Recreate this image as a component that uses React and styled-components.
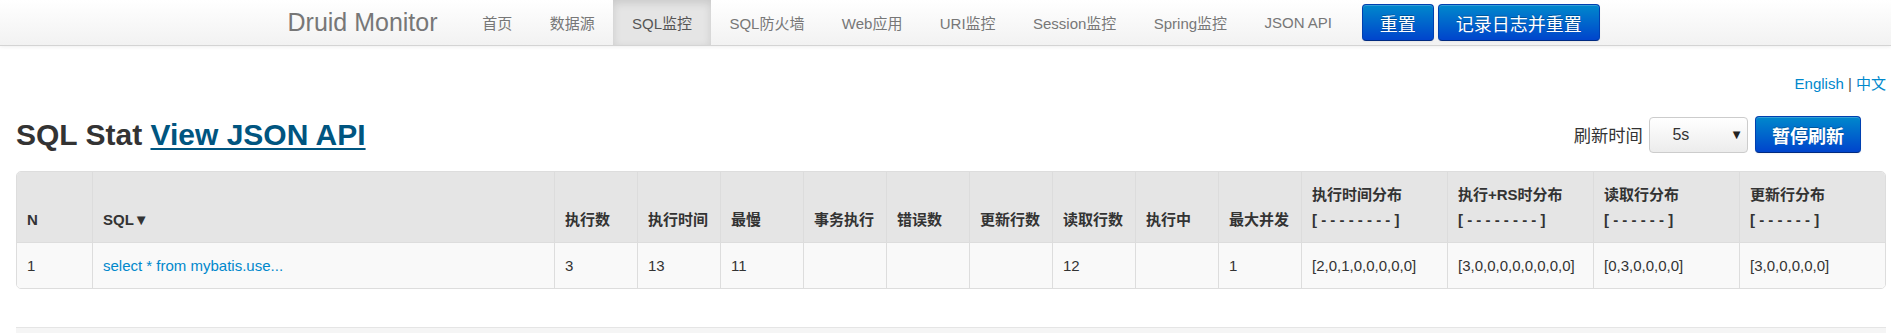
import React from "react";
import styled, { createGlobalStyle } from "styled-components";

const FONT = `"Liberation Sans", Arial, "Noto Sans CJK SC", sans-serif`;

const Global = createGlobalStyle`
  html, body { margin: 0; padding: 0; overflow: hidden; background: #fff; }
  body { font-family: ${FONT}; font-size: 15px; color: #333; }
  * { box-sizing: border-box; }
`;

const NavBar = styled.div`
  height: 46px;
  background: linear-gradient(to bottom, #ffffff, #f2f2f2);
  border-bottom: 1px solid #d4d4d4;
  box-shadow: 0 1px 4px rgba(0, 0, 0, 0.065);
`;

const NavInner = styled.div`
  width: 1316px;
  margin: 0 auto;
  height: 45px;
  display: flex;
  align-items: center;
`;

const Brand = styled.a`
  font-size: 25px;
  color: #777;
  text-decoration: none;
  margin-right: 26px;
  line-height: 45px;
`;

const NavList = styled.ul`
  list-style: none;
  margin: 0;
  padding: 0;
  display: flex;
  height: 45px;
`;

const NavItem = styled.li`
  height: 45px;
  padding: 0 18.7px;
  display: flex;
  align-items: center;
  font-size: 15px;
  color: ${(p) => (p.$active ? "#555" : "#777")};
  background: ${(p) => (p.$active ? "#e5e5e5" : "transparent")};
  box-shadow: ${(p) => (p.$active ? "inset 0 3px 8px rgba(0,0,0,0.125)" : "none")};
  white-space: nowrap;
`;

const NavButtons = styled.div`
  display: flex;
  gap: 4px;
  margin-left: 11px;
`;

const PrimaryButton = styled.button`
  font-family: ${FONT};
  height: 37px;
  padding: 0 ${(p) => p.$pad || 17}px;
  font-size: 18px;
  font-weight: ${(p) => (p.$bold ? "bold" : "normal")};
  color: #fff;
  text-shadow: 0 -1px 0 rgba(0, 0, 0, 0.25);
  background: linear-gradient(to bottom, #0088cc, #0044cc);
  border: 1px solid #0040b0;
  border-bottom-color: #002a80;
  border-radius: 4px;
  box-shadow: inset 0 1px 0 rgba(255, 255, 255, 0.2), 0 1px 2px rgba(0, 0, 0, 0.05);
  white-space: nowrap;
  cursor: pointer;
`;

const Page = styled.div`
  padding: 0 5px 0 16px;
`;

const LangBar = styled.div`
  margin-top: 28px;
  text-align: right;
  font-size: 15px;
  line-height: 20px;
  color: #555;
`;

const Link = styled.a`
  color: #0088cc;
  text-decoration: none;
`;

const HeaderRow = styled.div`
  margin-top: 22px;
  height: 37px;
  display: flex;
  align-items: center;
  justify-content: space-between;
`;

const Title = styled.h3`
  margin: 0;
  font-size: 30px;
  line-height: 36px;
  font-weight: bold;
  color: #333;
`;

const TitleLink = styled.a`
  color: #005580;
  text-decoration: underline;
  text-decoration-thickness: 2px;
  text-underline-offset: 3px;
`;

const RefreshGroup = styled.div`
  display: flex;
  align-items: center;
  gap: 6.6px;
  margin-right: 25px;
`;

const RefreshLabel = styled.span`
  font-size: 17.3px;
  color: #333;
`;

const SelectBox = styled.div`
  width: 99px;
  height: 36px;
  border: 1px solid #ccc;
  border-radius: 4px;
  background: linear-gradient(to bottom, #ffffff, #ececec);
  display: flex;
  align-items: center;
  justify-content: space-between;
  padding: 0 7px 0 22px;
  font-size: 16px;
  color: #333;
`;

const Caret = styled.span`
  font-size: 10px;
  color: #222;
  font-family: "DejaVu Sans", sans-serif;
`;

const TableWrap = styled.div`
  margin-top: 18px;
  border: 1px solid #ddd;
  border-radius: 5px;
  overflow: hidden;
`;

const Table = styled.table`
  width: 100%;
  table-layout: fixed;
  border-collapse: separate;
  border-spacing: 0;
  font-size: 15px;
  line-height: 25px;
`;

const Th = styled.th`
  background: #e5e5e5;
  text-align: left;
  vertical-align: bottom;
  padding: 10px 10px;
  font-weight: bold;
  color: #333;
  white-space: nowrap;
  border-left: ${(p) => (p.$first ? "none" : "1px solid #dcdcdc")};
`;

const Td = styled.td`
  background: #f9f9f9;
  padding: 10px 10px;
  vertical-align: middle;
  color: #333;
  white-space: nowrap;
  overflow: hidden;
  border-top: 1px solid #ddd;
  border-left: ${(p) => (p.$first ? "none" : "1px solid #ddd")};
`;

const SqlLink = styled.a`
  color: #0088cc;
  text-decoration: none;
`;

const Footer = styled.div`
  margin-top: 38px;
  border-top: 1px solid #e5e5e5;
  background: #f5f5f5;
  height: 6px;
`;

const navItems = [
  "首页",
  "数据源",
  "SQL监控",
  "SQL防火墙",
  "Web应用",
  "URI监控",
  "Session监控",
  "Spring监控",
  "JSON API",
];

const columns = [
  { label: "N", w: 75 },
  { label: "SQL▼" },
  { label: "执行数", w: 83 },
  { label: "执行时间", w: 83 },
  { label: "最慢", w: 83 },
  { label: "事务执行", w: 83 },
  { label: "错误数", w: 83 },
  { label: "更新行数", w: 83 },
  { label: "读取行数", w: 83 },
  { label: "执行中", w: 83 },
  { label: "最大并发", w: 83 },
  { label: "执行时间分布", sub: "[ - - - - - - - - ]", w: 146 },
  { label: "执行+RS时分布", sub: "[ - - - - - - - - ]", w: 146 },
  { label: "读取行分布", sub: "[ - - - - - - ]", w: 146 },
  { label: "更新行分布", sub: "[ - - - - - - ]", w: 146 },
];

const row = [
  "1",
  "select * from mybatis.use...",
  "3",
  "13",
  "11",
  "",
  "",
  "",
  "12",
  "",
  "1",
  "[2,0,1,0,0,0,0,0]",
  "[3,0,0,0,0,0,0,0,0]",
  "[0,3,0,0,0,0]",
  "[3,0,0,0,0,0]",
];

export default function App() {
  return (
    <>
      <Global />
      <NavBar>
        <NavInner>
          <Brand>Druid Monitor</Brand>
          <NavList>
            {navItems.map((n) => (
              <NavItem key={n} $active={n === "SQL监控"}>
                {n}
              </NavItem>
            ))}
          </NavList>
          <NavButtons>
            <PrimaryButton>重置</PrimaryButton>
            <PrimaryButton>记录日志并重置</PrimaryButton>
          </NavButtons>
        </NavInner>
      </NavBar>
      <Page>
        <LangBar>
          <Link>English</Link> | <Link>中文</Link>
        </LangBar>
        <HeaderRow>
          <Title>
            SQL Stat <TitleLink>View JSON API</TitleLink>
          </Title>
          <RefreshGroup>
            <RefreshLabel>刷新时间</RefreshLabel>
            <SelectBox>
              <span>5s</span>
              <Caret>▼</Caret>
            </SelectBox>
            <PrimaryButton $bold $pad={16}>
              暂停刷新
            </PrimaryButton>
          </RefreshGroup>
        </HeaderRow>
        <TableWrap>
          <Table>
            <colgroup>
              {columns.map((c, i) => (
                <col key={i} style={c.w ? { width: c.w } : undefined} />
              ))}
            </colgroup>
            <thead>
              <tr>
                {columns.map((c, i) => (
                  <Th key={i} $first={i === 0}>
                    {c.label}
                    {c.sub && (
                      <>
                        <br />
                        {c.sub}
                      </>
                    )}
                  </Th>
                ))}
              </tr>
            </thead>
            <tbody>
              <tr>
                {row.map((v, i) => (
                  <Td key={i} $first={i === 0}>
                    {i === 1 ? <SqlLink>{v}</SqlLink> : v}
                  </Td>
                ))}
              </tr>
            </tbody>
          </Table>
        </TableWrap>
        <Footer />
      </Page>
    </>
  );
}
